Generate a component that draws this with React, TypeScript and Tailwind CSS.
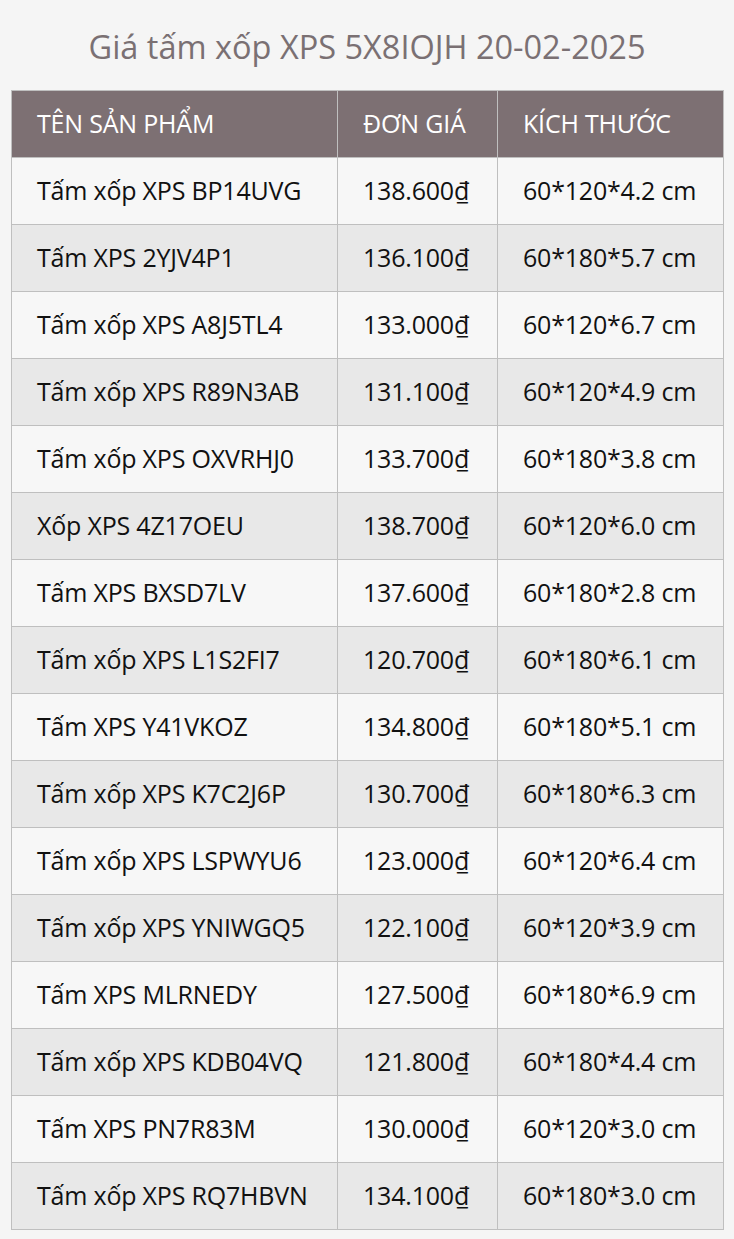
import React from "react";

const rows: [string, string, string][] = [
  ["Tấm xốp XPS BP14UVG", "138.600₫", "60*120*4.2 cm"],
  ["Tấm XPS 2YJV4P1", "136.100₫", "60*180*5.7 cm"],
  ["Tấm xốp XPS A8J5TL4", "133.000₫", "60*120*6.7 cm"],
  ["Tấm xốp XPS R89N3AB", "131.100₫", "60*120*4.9 cm"],
  ["Tấm xốp XPS OXVRHJ0", "133.700₫", "60*180*3.8 cm"],
  ["Xốp XPS 4Z17OEU", "138.700₫", "60*120*6.0 cm"],
  ["Tấm XPS BXSD7LV", "137.600₫", "60*180*2.8 cm"],
  ["Tấm xốp XPS L1S2FI7", "120.700₫", "60*180*6.1 cm"],
  ["Tấm XPS Y41VKOZ", "134.800₫", "60*180*5.1 cm"],
  ["Tấm xốp XPS K7C2J6P", "130.700₫", "60*180*6.3 cm"],
  ["Tấm xốp XPS LSPWYU6", "123.000₫", "60*120*6.4 cm"],
  ["Tấm xốp XPS YNIWGQ5", "122.100₫", "60*120*3.9 cm"],
  ["Tấm XPS MLRNEDY", "127.500₫", "60*180*6.9 cm"],
  ["Tấm xốp XPS KDB04VQ", "121.800₫", "60*180*4.4 cm"],
  ["Tấm XPS PN7R83M", "130.000₫", "60*120*3.0 cm"],
  ["Tấm xốp XPS RQ7HBVN", "134.100₫", "60*180*3.0 cm"],
];

export default function App() {
  return (
    <div
      className="w-[734px] min-h-[1239px] bg-[#f5f5f5] px-[11px] pb-[11px]"
      style={{ fontFamily: '"Open Sans", "Noto Sans", sans-serif' }}
    >
      <h1 className="h-[90px] flex items-center justify-center pt-[4px] text-[32.5px] text-[#7a7073] font-normal">
        Giá tấm xốp XPS 5X8IOJH 20-02-2025
      </h1>
      <table className="w-[712px] border-collapse table-fixed">
        <colgroup>
          <col className="w-[326px]" />
          <col className="w-[160px]" />
          <col className="w-[226px]" />
        </colgroup>
        <thead>
          <tr className="bg-[#7d7073] text-white h-[67px]">
            <th className="border border-[#bfbfbf] text-left font-normal pl-[25px] text-[25px] tracking-[-0.2px]">TÊN SẢN PHẨM</th>
            <th className="border border-[#bfbfbf] text-left font-normal pl-[25px] text-[25px] tracking-[-0.2px]">ĐƠN GIÁ</th>
            <th className="border border-[#bfbfbf] text-left font-normal pl-[25px] text-[25px] tracking-[-0.2px]">KÍCH THƯỚC</th>
          </tr>
        </thead>
        <tbody>
          {rows.map((r, i) => (
            <tr key={i} className={`h-[67px] text-[#111] ${i % 2 === 0 ? "bg-[#f7f7f7]" : "bg-[#e8e8e8]"}`}>
              <td className="border border-[#bfbfbf] pl-[25px] text-[25px] tracking-[-0.2px]">{r[0]}</td>
              <td className="border border-[#bfbfbf] pl-[25px] text-[25px] tracking-[-0.2px]">{r[1]}</td>
              <td className="border border-[#bfbfbf] pl-[25px] text-[25px] tracking-[-0.2px]">{r[2]}</td>
            </tr>
          ))}
        </tbody>
      </table>
    </div>
  );
}
